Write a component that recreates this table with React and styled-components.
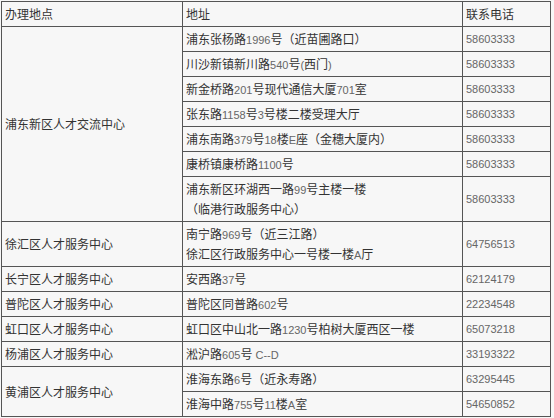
import React from "react";
import styled, { createGlobalStyle } from "styled-components";

const GlobalStyle = createGlobalStyle`
  html, body {
    margin: 0;
    padding: 0;
    background: #f7f7f7;
  }
  body {
    font-family: "Noto Sans CJK SC", "Liberation Sans", sans-serif;
    color: #333;
  }
`;

const rows = [
  { place: "浦东新区人才交流中心", span: 7, addr: ["浦东张杨路1996号（近苗圃路口）"], tel: "58603333" },
  { addr: ["川沙新镇新川路540号(西门)"], tel: "58603333" },
  { addr: ["新金桥路201号现代通信大厦701室"], tel: "58603333" },
  { addr: ["张东路1158号3号楼二楼受理大厅"], tel: "58603333" },
  { addr: ["浦东南路379号18楼E座（金穗大厦内）"], tel: "58603333" },
  { addr: ["康桥镇康桥路1100号"], tel: "58603333" },
  { addr: ["浦东新区环湖西一路99号主楼一楼", "（临港行政服务中心）"], tel: "58603333" },
  { place: "徐汇区人才服务中心", span: 1, addr: ["南宁路969号（近三江路）", "徐汇区行政服务中心一号楼一楼A厅"], tel: "64756513" },
  { place: "长宁区人才服务中心", span: 1, addr: ["安西路37号"], tel: "62124179" },
  { place: "普陀区人才服务中心", span: 1, addr: ["普陀区同普路602号"], tel: "22234548" },
  { place: "虹口区人才服务中心", span: 1, addr: ["虹口区中山北一路1230号柏树大厦西区一楼"], tel: "65073218" },
  { place: "杨浦区人才服务中心", span: 1, addr: ["淞沪路605号 C--D"], tel: "33193322" },
  { place: "黄浦区人才服务中心", span: 2, addr: ["淮海东路6号（近永寿路）"], tel: "63295445" },
  { addr: ["淮海中路755号11楼A室"], tel: "54650852" },
];

// latin runs (digits, letters, brackets) are set in a smaller grey font
function Mixed({ text }) {
  const parts = text.split(/([\x20-\x7e]+)/).filter(Boolean);
  return parts.map((p, i) =>
    /^[\x20-\x7e]+$/.test(p) ? <Num key={i}>{p}</Num> : <span key={i}>{p}</span>
  );
}

export default function App() {
  return (
    <>
      <GlobalStyle />
      <Table>
        <colgroup>
          <col style={{ width: 181 }} />
          <col style={{ width: 280 }} />
          <col style={{ width: 88 }} />
        </colgroup>
        <thead>
          <tr>
            <Cell as="th"><Line>办理地点</Line></Cell>
            <Cell as="th"><Line>地址</Line></Cell>
            <Cell as="th"><Line>联系电话</Line></Cell>
          </tr>
        </thead>
        <tbody>
          {rows.map((r, i) => (
            <tr key={i}>
              {r.place && (
                <Cell rowSpan={r.span}>
                  <Line>{r.place}</Line>
                </Cell>
              )}
              <Cell>
                {r.addr.map((line, j) => (
                  <Line key={j}>
                    <Mixed text={line} />
                  </Line>
                ))}
              </Cell>
              <Cell>
                <Phone>{r.tel}</Phone>
              </Cell>
            </tr>
          ))}
        </tbody>
      </Table>
    </>
  );
}

const Table = styled.table`
  margin: 1px 0 0 1px;
  width: 549px;
  table-layout: fixed;
  border-collapse: collapse;
`;

const Cell = styled.td`
  border: 1px solid #555;
  padding: 2px 3px;
  font-size: 12px;
  font-weight: normal;
  line-height: 20px;
  text-align: left;
  vertical-align: middle;
  color: #333;
  white-space: nowrap;
`;

const Line = styled.div`
  height: 20px;
  line-height: 20px;
  overflow: hidden;
`;

const Num = styled.span`
  font-family: "Liberation Sans", sans-serif;
  font-size: 11px;
  line-height: 0;
  color: #666;
  white-space: pre;
`;

const Phone = styled.div`
  height: 20px;
  line-height: 20px;
  overflow: hidden;
  font-family: "Liberation Sans", sans-serif;
  font-size: 11px;
  color: #666;
`;
